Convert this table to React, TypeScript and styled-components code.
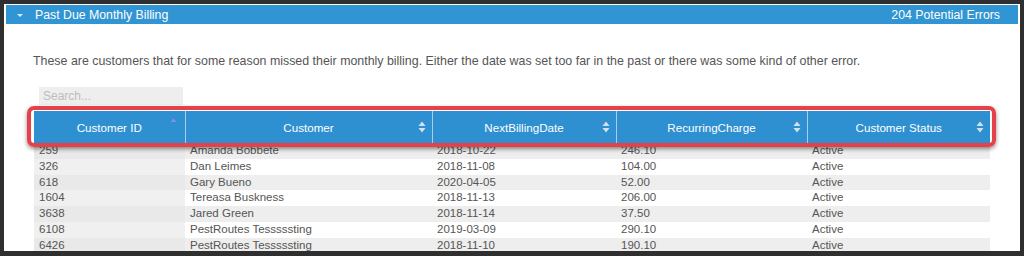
import React from "react";
import styled, { createGlobalStyle } from "styled-components";

const Global = createGlobalStyle`
  html, body { margin: 0; padding: 0; background: #2f2f2f; }
  body { font-family: "Liberation Sans", Arial, sans-serif; }
  * { box-sizing: border-box; }
`;

const Frame = styled.div`
  width: 1024px;
  height: 256px;
  padding: 4px 4px 5px 4px;
  background: #2f2f2f;
`;

const Panel = styled.div`
  height: 247px;
  background: #ffffff;
  padding: 1px 2px 0 2px;
  overflow: hidden;
  display: flex;
  flex-direction: column;
`;

const TitleBar = styled.div`
  height: 19px;
  background: #3295d3;
  color: #ffffff;
  display: flex;
  align-items: center;
  font-size: 12.3px;
  padding: 0 18px 0 11px;
  flex-shrink: 0;
`;

const Caret = styled.span`
  width: 0;
  height: 0;
  border-left: 3px solid transparent;
  border-right: 3px solid transparent;
  border-top: 3px solid #d6e9f7;
  margin-right: 12px;
  margin-top: 1px;
`;

const TitleText = styled.span`
  flex: 1;
`;

const Content = styled.div`
  padding: 0 0 0 27px;
  display: flex;
  flex-direction: column;
  align-items: flex-start;
`;

const Description = styled.p`
  margin: 30px 0 0 0;
  font-size: 12.4px;
  line-height: 14px;
  color: #555555;
`;

const Search = styled.input`
  margin: 19px 0 0 6px;
  width: 144px;
  height: 18px;
  border: none;
  background: #eeeeee;
  font-family: "Liberation Sans", Arial, sans-serif;
  font-size: 12px;
  padding: 0 4px;
  outline: none;
  &::placeholder { color: #bdbdbd; }
`;

const TableWrap = styled.div`
  position: relative;
  margin: 6px 0 0 1px;
  width: 956px;
`;

const Table = styled.table`
  width: 956px;
  border-collapse: collapse;
  table-layout: fixed;
  font-size: 11.5px;
  color: #555555;
`;

const Th = styled.th<{ $w: number }>`
  width: ${(p) => p.$w}px;
  height: 32px;
  background: #2e90d1;
  color: #ffffff;
  font-weight: normal;
  font-size: 11.6px;
  position: relative;
  padding: 0;
  text-align: center;
  border-left: 1px solid #a9cfee;
  &:first-child { border-left: none; }
`;

const SortIcon = styled.svg`
  position: absolute;
  right: 6px;
  top: 50%;
  transform: translateY(-50%);
`;

const Tr = styled.tr<{ $odd: boolean }>`
  background: ${(p) => (p.$odd ? "#eeeeee" : "#ffffff")};
`;

const Td = styled.td<{ $sorted?: boolean; $odd: boolean }>`
  height: 15.8px;
  padding: 0 5px;
  line-height: 15.8px;
  white-space: nowrap;
  background: ${(p) => (p.$sorted ? (p.$odd ? "#e9e9e9" : "#f0f0f0") : "transparent")};
`;

const Highlight = styled.div`
  position: absolute;
  left: -7px;
  top: -5px;
  width: 969px;
  height: 41px;
  border: 4px solid #e5414b;
  border-radius: 7px;
  box-shadow: 0 2px 4px rgba(0, 0, 0, 0.45), inset 0 0 1px rgba(0,0,0,0.2);
  pointer-events: none;
`;

const columns = [
  { label: "Customer ID", w: 151, sort: "asc" },
  { label: "Customer", w: 247, sort: "both" },
  { label: "NextBillingDate", w: 184, sort: "both" },
  { label: "RecurringCharge", w: 191, sort: "both" },
  { label: "Customer Status", w: 183, sort: "both" },
];

const rows = [
  ["259", "Amanda Bobbete", "2018-10-22", "246.10", "Active"],
  ["326", "Dan Leimes", "2018-11-08", "104.00", "Active"],
  ["618", "Gary Bueno", "2020-04-05", "52.00", "Active"],
  ["1604", "Tereasa Buskness", "2018-11-13", "206.00", "Active"],
  ["3638", "Jared Green", "2018-11-14", "37.50", "Active"],
  ["6108", "PestRoutes Tesssssting", "2019-03-09", "290.10", "Active"],
  ["6426", "PestRoutes Tesssssting", "2018-11-10", "190.10", "Active"],
];

function Sort({ kind }: { kind: string }) {
  if (kind === "asc") {
    return (
      <SortIcon width="7" height="14" viewBox="0 0 7 14" style={{ right: 8, marginTop: -3 }}>
        <path d="M0.5 5 L3.5 1.5 L6.5 5 Z" fill="#8e8ee0" />
      </SortIcon>
    );
  }
  return (
    <SortIcon width="8" height="14" viewBox="0 0 8 14">
      <path d="M0.5 6 L4 1.5 L7.5 6 Z" fill="#d3e0ef" />
      <path d="M0.5 8 L4 12.5 L7.5 8 Z" fill="#d3e0ef" />
    </SortIcon>
  );
}

export default function App() {
  return (
    <>
      <Global />
      <Frame>
        <Panel>
          <TitleBar>
            <Caret />
            <TitleText>Past Due Monthly Billing</TitleText>
            <span>204 Potential Errors</span>
          </TitleBar>
          <Content>
            <Description>
              These are customers that for some reason missed their monthly billing. Either the date was set too far in the past or there was some kind of other error.
            </Description>
            <Search placeholder="Search..." />
            <TableWrap>
              <Table>
                <thead>
                  <tr>
                    {columns.map((c) => (
                      <Th key={c.label} $w={c.w}>
                        {c.label}
                        <Sort kind={c.sort} />
                      </Th>
                    ))}
                  </tr>
                </thead>
                <tbody>
                  {rows.map((r, i) => (
                    <Tr key={r[0]} $odd={i % 2 === 0}>
                      {r.map((cell, j) => (
                        <Td key={j} $sorted={j === 0} $odd={i % 2 === 0}>
                          {cell}
                        </Td>
                      ))}
                    </Tr>
                  ))}
                </tbody>
              </Table>
              <Highlight />
            </TableWrap>
          </Content>
        </Panel>
      </Frame>
    </>
  );
}
